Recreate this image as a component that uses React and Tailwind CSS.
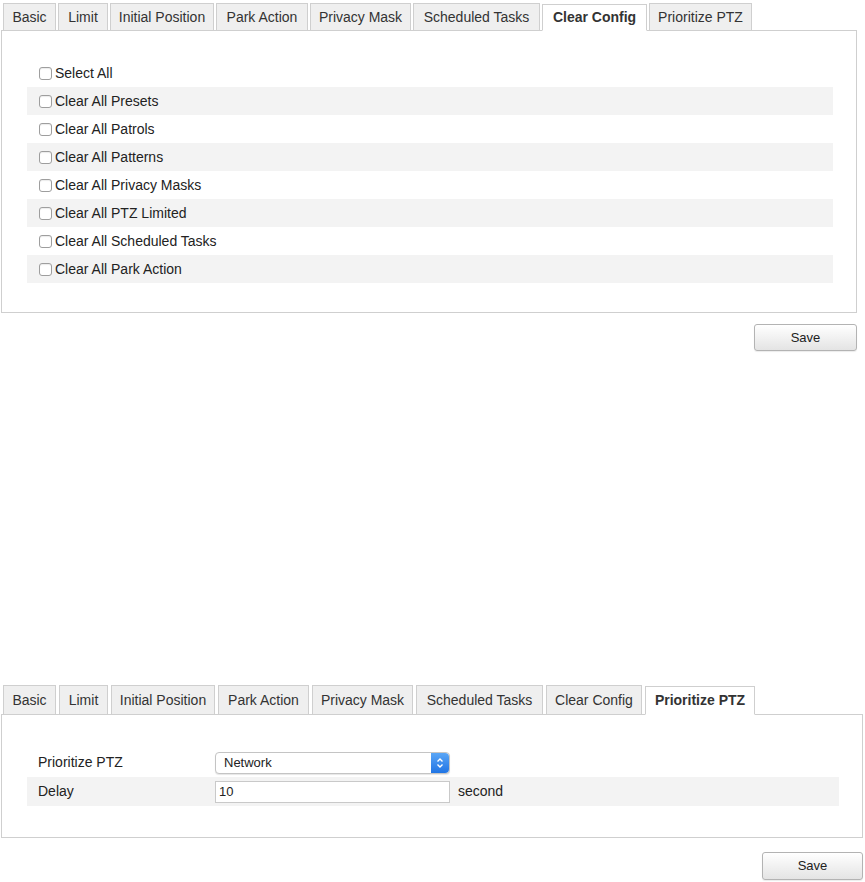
const font = { fontFamily: '"Liberation Sans", Arial, sans-serif' };

const topTabs = [
    { label: "Basic", w: "w-[53px]" },
    { label: "Limit", w: "w-[50px]" },
    { label: "Initial Position", w: "w-[104px]" },
    { label: "Park Action", w: "w-[92px]" },
    { label: "Privacy Mask", w: "w-[101px]" },
    { label: "Scheduled Tasks", w: "w-[127px]" },
    { label: "Clear Config", w: "w-[105px]", active: true },
    { label: "Prioritize PTZ", w: "w-[103px]" },
];

const bottomTabs = [
    { label: "Basic", w: "w-[53px]" },
    { label: "Limit", w: "w-[49px]" },
    { label: "Initial Position", w: "w-[104px]" },
    { label: "Park Action", w: "w-[91px]" },
    { label: "Privacy Mask", w: "w-[101px]" },
    { label: "Scheduled Tasks", w: "w-[127px]" },
    { label: "Clear Config", w: "w-[96px]" },
    { label: "Prioritize PTZ", w: "w-[110px]", active: true },
];

const clearItems = [
    "Select All",
    "Clear All Presets",
    "Clear All Patrols",
    "Clear All Patterns",
    "Clear All Privacy Masks",
    "Clear All PTZ Limited",
    "Clear All Scheduled Tasks",
    "Clear All Park Action",
];

function Tabs({ tabs, gap, h }) {
    return (
        <div className={`flex items-end pl-[3px] ${gap}`}>
            {tabs.map((t) => (
                <div
                    key={t.label}
                    className={`${t.w} ${h} shrink-0 flex items-center justify-center border border-[#cfcfcf] text-[14px] whitespace-nowrap text-[#333] ${
                        t.active
                            ? "bg-white border-b-white font-bold text-[#222] relative z-10 -mb-px"
                            : "bg-[#efefef] border-b-0"
                    }`}
                >
                    {t.label}
                </div>
            ))}
        </div>
    );
}

function Box() {
    return (
        <span className="w-[13px] h-[13px] rounded-[3px] border border-[#9e9e9e] bg-white shadow-[inset_0_1px_1px_rgba(0,0,0,0.08)] shrink-0" />
    );
}

function SaveButton({ w, h }) {
    return (
        <div className="flex justify-end">
            <button
                className={`${w} ${h} rounded-[3px] border border-[#b3b3b3] bg-gradient-to-b from-white to-[#e4e4e4] text-[13px] font-medium text-[#222] shadow-[0_1px_1px_rgba(0,0,0,0.08)]`}
            >
                Save
            </button>
        </div>
    );
}

function Stepper() {
    return (
        <span className="w-[18px] h-full rounded-r-[4px] bg-gradient-to-b from-[#5aa6f6] to-[#1f74e4] flex items-center justify-center">
            <svg width="8" height="12" viewBox="0 0 8 12" fill="none">
                <path d="M1.5 4.5 L4 2 L6.5 4.5" stroke="white" strokeWidth="1.4" />
                <path d="M1.5 7.5 L4 10 L6.5 7.5" stroke="white" strokeWidth="1.4" />
            </svg>
        </span>
    );
}

export default function App() {
    return (
        <div className="w-[865px] h-[882px] bg-white overflow-hidden" style={font}>

            {/* CLEAR CONFIG */}
            <div className="pt-[3px] pr-[8px]">
                <Tabs tabs={topTabs} gap="gap-[2px]" h="h-[27px]" />
                <div className="ml-[1px] border border-[#cfcfcf] pt-[28px] pb-[29px] pl-[25px] pr-[23px]">
                    {clearItems.map((item, i) => (
                        <div
                            key={item}
                            className={`h-[28px] flex items-center gap-[3px] pl-[12px] text-[14px] text-[#222] ${
                                i % 2 === 1 ? "bg-[#f3f3f3]" : ""
                            }`}
                        >
                            <Box />
                            {item}
                        </div>
                    ))}
                </div>
                <div className="mt-[11px]">
                    <SaveButton w="w-[103px]" h="h-[27px]" />
                </div>
            </div>

            {/* PRIORITIZE PTZ */}
            <div className="mt-[334px] pr-[2px]">
                <Tabs tabs={bottomTabs} gap="gap-[3px]" h="h-[29px]" />
                <div className="ml-[1px] border border-[#cfcfcf] pt-[33px] pb-[31px] pl-[25px] pr-[23px]">
                    <div className="h-[29px] flex items-center pl-[11px] text-[14px] text-[#222]">
                        <span className="w-[177px]">Prioritize PTZ</span>
                        <div className="w-[235px] h-[22px] flex items-center rounded-[4px] border border-[#c4c4c4] bg-white shadow-[0_1px_1px_rgba(0,0,0,0.1)]">
                            <span className="flex-1 pl-[8px] text-[13px]">Network</span>
                            <Stepper />
                        </div>
                    </div>
                    <div className="h-[29px] flex items-center pl-[11px] bg-[#f3f3f3] text-[14px] text-[#222]">
                        <span className="w-[177px]">Delay</span>
                        <div className="w-[235px] h-[22px] flex items-center border border-[#c9c9c9] bg-white pl-[3px] text-[13px]">
                            10
                        </div>
                        <span className="ml-[8px]">second</span>
                    </div>
                </div>
                <div className="mt-[14px]">
                    <SaveButton w="w-[101px]" h="h-[28px]" />
                </div>
            </div>
        </div>
    );
}
